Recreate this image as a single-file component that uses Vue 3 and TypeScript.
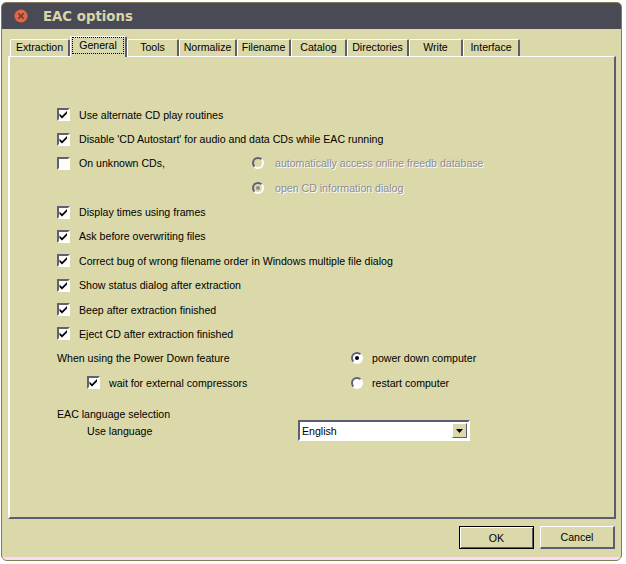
<script setup lang="ts">
const tabs = [
  { label: 'Extraction', w: 60 },
  { label: 'General', w: 57, active: true },
  { label: 'Tools', w: 52 },
  { label: 'Normalize', w: 58 },
  { label: 'Filename', w: 54 },
  { label: 'Catalog', w: 56 },
  { label: 'Directories', w: 62 },
  { label: 'Write', w: 54 },
  { label: 'Interface', w: 57 },
]
const topChecks = ['Use alternate CD play routines', "Disable 'CD Autostart' for audio and data CDs while EAC running"]
const midChecks = [
  'Display times using frames',
  'Ask before overwriting files',
  'Correct bug of wrong filename order in Windows multiple file dialog',
  'Show status dialog after extraction',
  'Beep after extraction finished',
  'Eject CD after extraction finished',
]
</script>

<template>
  <div class="window">
    <header class="titlebar">
      <svg class="close" width="16" height="16" viewBox="0 0 16 16">
        <circle cx="8" cy="8" r="7.5" fill="#5a4a48" />
        <circle cx="8" cy="8" r="6.5" fill="#e0684a" />
        <path d="M5.3 5.3l5.4 5.4M10.7 5.3l-5.4 5.4" stroke="#6b3a34" stroke-width="1.6" />
      </svg>
      <span class="title">EAC options</span>
    </header>
    <div class="body">
      <nav class="tabs">
        <div
          v-for="t in tabs"
          :key="t.label"
          class="tab"
          :class="{ active: t.active }"
          :style="{ width: t.w + 'px' }"
        >
          <span class="tab-label">{{ t.label }}</span>
        </div>
      </nav>
      <section class="panel">
        <div v-for="c in topChecks" :key="c" class="row">
          <span class="box"><svg width="9" height="9" viewBox="0 0 9 9"><path d="M0.5 3.5l2.5 2.5L8 1V3.4L3 8.4 0.5 5.9z" fill="#000" /></svg></span>
          <span class="lbl">{{ c }}</span>
        </div>
        <div class="row split">
          <div class="left"><span class="box"></span><span class="lbl">On unknown CDs,</span></div>
          <div class="right disabled"><span class="radio"></span><span class="lbl">automatically access online freedb database</span></div>
        </div>
        <div class="row split">
          <div class="left"></div>
          <div class="right disabled"><span class="radio"><i class="dot"></i></span><span class="lbl">open CD information dialog</span></div>
        </div>
        <div v-for="c in midChecks" :key="c" class="row">
          <span class="box"><svg width="9" height="9" viewBox="0 0 9 9"><path d="M0.5 3.5l2.5 2.5L8 1V3.4L3 8.4 0.5 5.9z" fill="#000" /></svg></span>
          <span class="lbl">{{ c }}</span>
        </div>
        <div class="row split">
          <div class="left plain"><span>When using the Power Down feature</span></div>
          <div class="right far"><span class="radio on"><i class="dot"></i></span><span class="lbl">power down computer</span></div>
        </div>
        <div class="row split">
          <div class="left indent"><span class="box"><svg width="9" height="9" viewBox="0 0 9 9"><path d="M0.5 3.5l2.5 2.5L8 1V3.4L3 8.4 0.5 5.9z" fill="#000" /></svg></span><span class="lbl">wait for external compressors</span></div>
          <div class="right far"><span class="radio on"></span><span class="lbl">restart computer</span></div>
        </div>
        <div class="lang-head">EAC language selection</div>
        <div class="lang-row">
          <span class="use">Use language</span>
          <div class="select">
            <span class="value">English</span>
            <span class="arrow"><svg width="7" height="4" viewBox="0 0 7 4"><path d="M0 0h7L3.5 4z" fill="#000" /></svg></span>
          </div>
        </div>
      </section>
      <footer class="actions">
        <button class="btn default">OK</button>
        <button class="btn">Cancel</button>
      </footer>
    </div>
    <div class="pink"></div>
  </div>
</template>

<style>
html, body { margin: 0; background: #fff; }
</style>

<style scoped>
.window {
  box-sizing: border-box;
  width: 621px;
  height: 559px;
  margin: 2px 0 0 1px;
  display: flex;
  flex-direction: column;
  background: #dbd9aa;
  border: 1px solid #857a55;
  border-radius: 5px 5px 6px 6px;
  overflow: hidden;
  font: 10.6px "Liberation Sans", Arial, sans-serif;
  color: #000;
}
.titlebar {
  height: 26px;
  flex: none;
  display: flex;
  align-items: center;
  gap: 14px;
  padding-left: 11px;
  background: #4a4a56;
}
.title {
  font: bold 13.3px "DejaVu Sans", sans-serif;
  color: #d8d6a8;
}
.body {
  flex: 1;
  min-height: 0;
  display: flex;
  flex-direction: column;
  padding: 7px 5px 0 6px;
}
.tabs {
  display: flex;
  height: 20px;
  padding-left: 2px;
  position: relative;
  z-index: 1;
}
.tab {
  box-sizing: border-box;
  height: 17px;
  margin-top: 3px;
  border: 1px solid #fff;
  border-bottom: none;
  border-right: 2px solid #5c5c72;
  border-radius: 2px 2px 0 0;
  text-align: center;
  line-height: 15px;
  white-space: nowrap;
}
.tab.active {
  height: 21px;
  margin-top: 0;
  background: #dbd9aa;
  line-height: 17px;
}
.tab-label { display: inline-block; }
.tab.active .tab-label {
  outline: 1px dotted #000;
  width: calc(100% - 4px);
  line-height: 15px;
  margin-top: 1px;
}
.panel {
  box-sizing: border-box;
  height: 463px;
  flex: none;
  border: 1px solid;
  border-color: #fff #5c5c72 #5c5c72 #fff;
  border-width: 1px 2px 2px 2px;
  padding: 45.6px 0 0 47px;
}
.row {
  height: 24.35px;
  display: flex;
  align-items: center;
  white-space: nowrap;
}
.split .left { width: 195px; display: flex; align-items: center; flex: none; }
.split .right { display: flex; align-items: center; }
.split .left.plain { width: 294px; }
.split .left.indent { padding-left: 30px; width: 264px; }
.lbl { margin-left: 9px; }
.right .lbl { margin-left: 11px; }
.right.far .lbl { margin-left: 9px; }
.box {
  box-sizing: border-box;
  flex: none;
  width: 13px;
  height: 13px;
  background: #fdfdf5;
  border: 2px solid;
  border-color: #5f5f78 #fff #fff #5f5f78;
  display: flex;
  align-items: center;
  justify-content: center;
}
.radio {
  box-sizing: border-box;
  flex: none;
  width: 12px;
  height: 12px;
  border-radius: 50%;
  border: 2px solid;
  border-color: #5f5f78 #fff #fff #5f5f78;
  background: #dbd9aa;
  display: flex;
  align-items: center;
  justify-content: center;
}
.radio.on { background: #fff; }
.dot {
  width: 4px;
  height: 4px;
  border-radius: 50%;
  background: #8a8a96;
}
.radio.on .dot { background: #000; }
.disabled .lbl {
  color: #8b8b98;
  text-shadow: 1px 1px 0 #fff;
}
.lang-head { margin-top: 11px; height: 15px; line-height: 17px; }
.lang-row {
  display: flex;
  align-items: center;
  height: 20px;
}
.use { width: 211px; padding-left: 30px; flex: none; }
.select {
  box-sizing: border-box;
  width: 172px;
  height: 21px;
  display: flex;
  align-items: center;
  justify-content: space-between;
  background: #fff;
  border: 2px solid;
  border-color: #5c5c72 #fff #fff #5c5c72;
  padding-left: 2px;
}
.arrow {
  box-sizing: border-box;
  width: 15px;
  height: 15px;
  margin-right: 1px;
  background: #dbd9aa;
  border: 1px solid;
  border-color: #fff #5c5c72 #5c5c72 #fff;
  display: flex;
  align-items: center;
  justify-content: center;
}
.actions {
  flex: 1;
  display: flex;
  justify-content: flex-end;
  align-items: flex-start;
  gap: 6px;
  padding-top: 7px;
  padding-right: 1px;
}
.btn {
  box-sizing: border-box;
  width: 75px;
  height: 23px;
  padding: 0;
  background: #dbd9aa;
  border: 1px solid;
  border-color: #fff #5c5c72 #5c5c72 #fff;
  border-width: 1px 2px 2px 1px;
  font: 10.6px "Liberation Sans", Arial, sans-serif;
  color: #000;
}
.btn.default {
  border: 1px solid #000;
  box-shadow: inset 1px 1px 0 #fff, inset -1px -1px 0 #5c5c72;
}
.pink {
  height: 3px;
  flex: none;
  background: #fbd9fb;
}
</style>
